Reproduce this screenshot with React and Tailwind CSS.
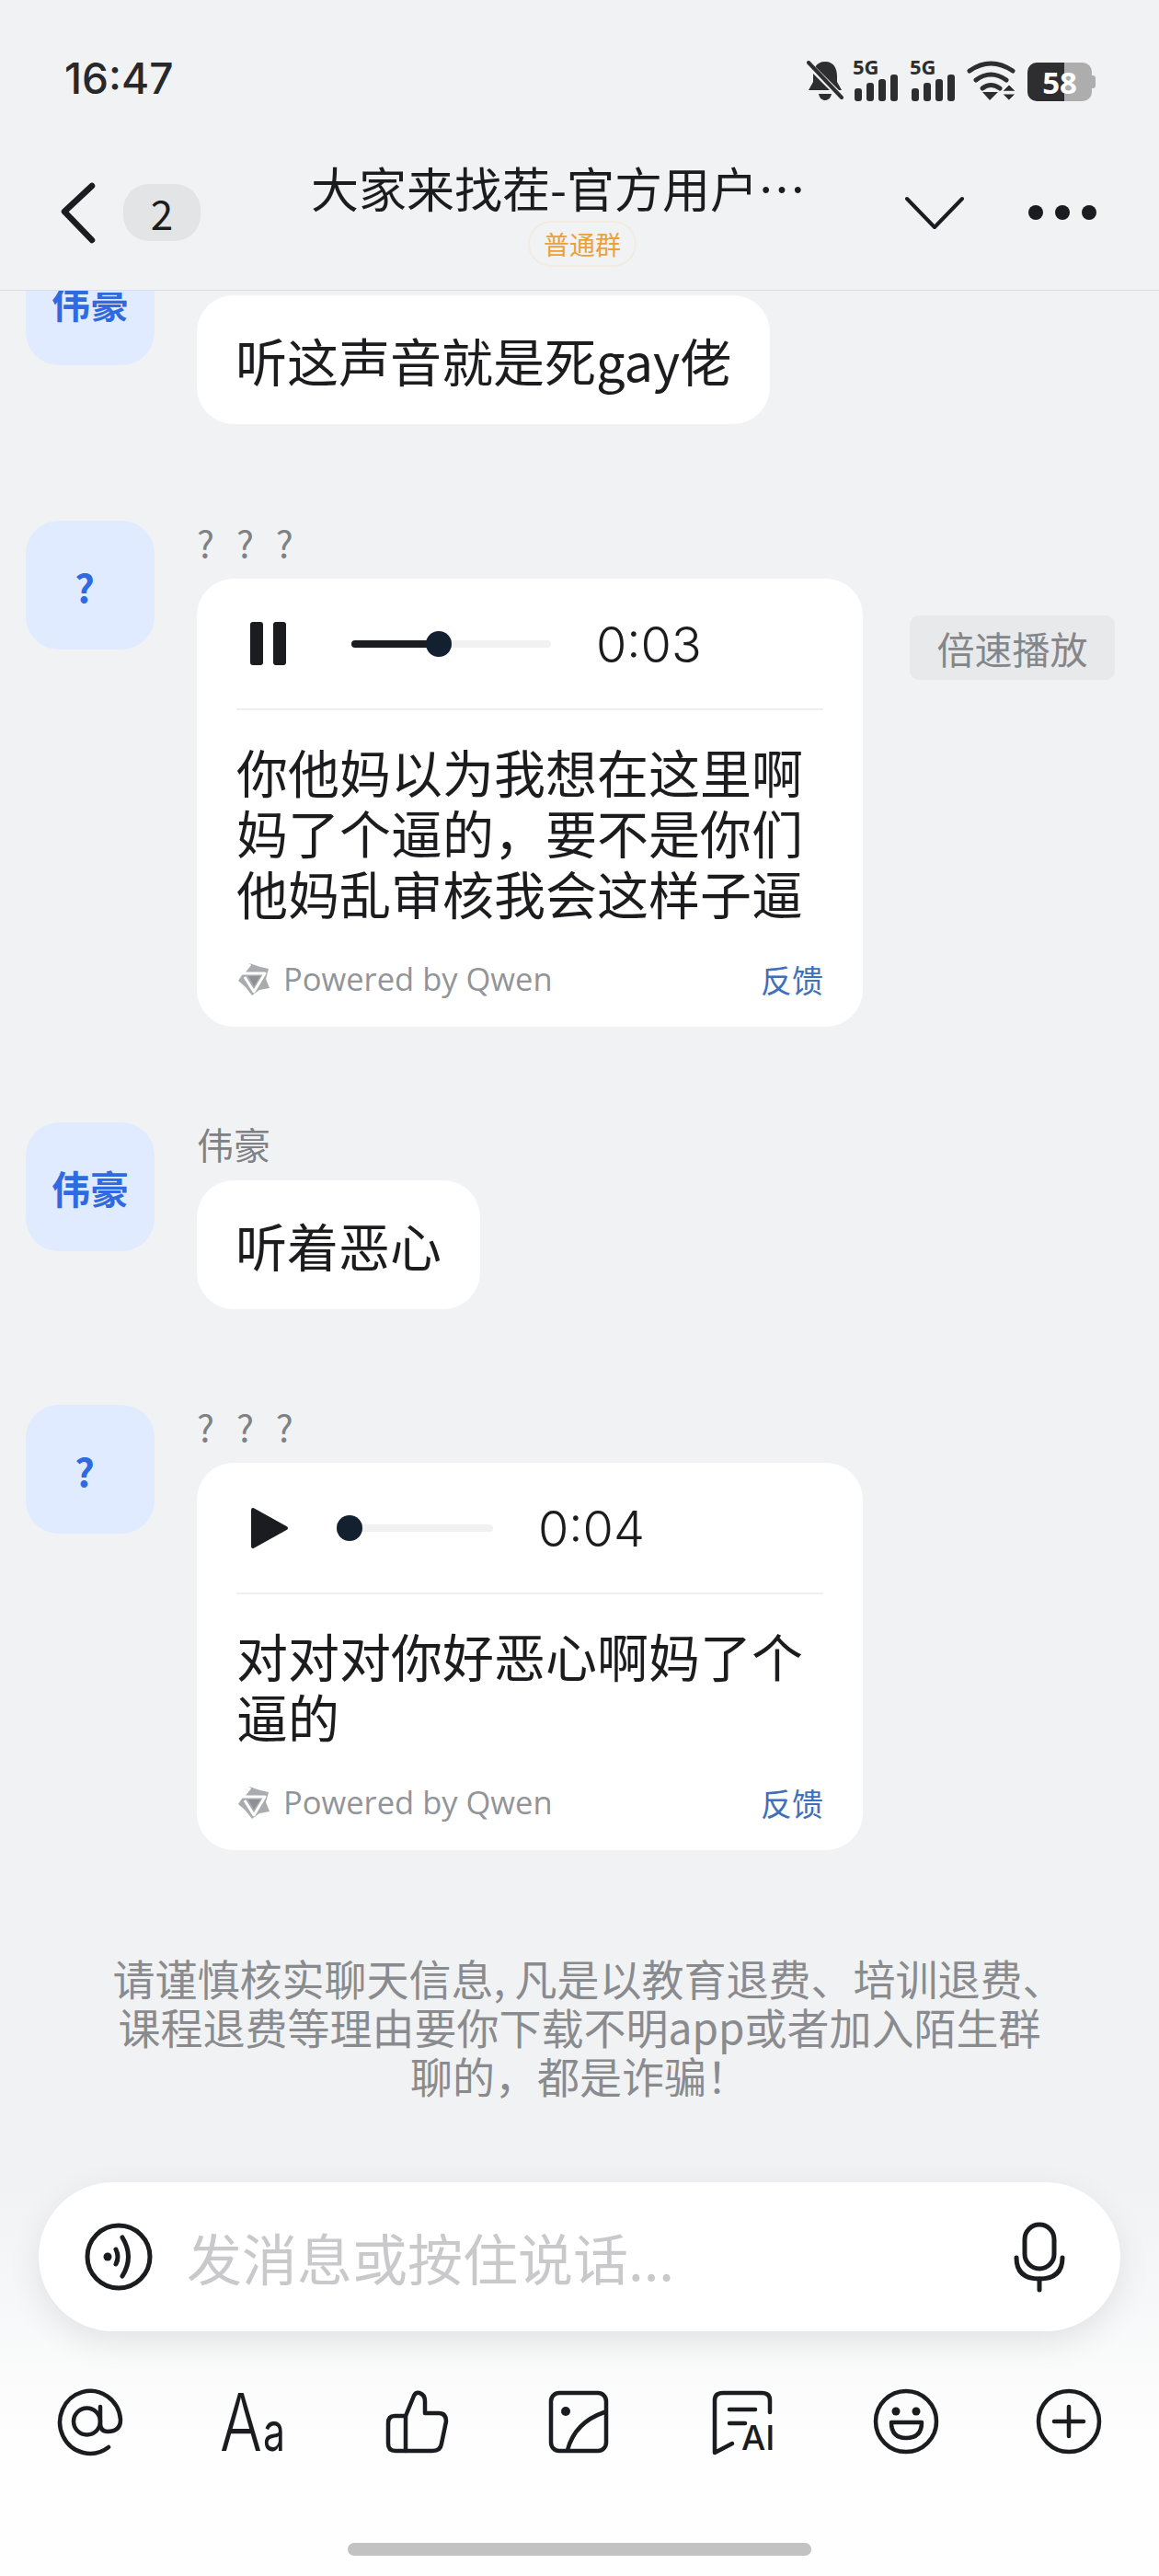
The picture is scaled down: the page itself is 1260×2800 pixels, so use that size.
const Slider = ({ width, pct }) => (
  <div className="relative h-[8px] rounded-full bg-[#f1f1f2]" style={{ width }}>
    <div className="h-full rounded-full bg-[#1b1c20]" style={{ width: `${pct}%` }} />
    <div className="absolute top-[-10px] h-[28px] w-[28px] rounded-full bg-[#13202f]" style={{ left: `calc(${pct}% - 14px)` }} />
  </div>
);

const Qwen = () => (
  <svg width="38" height="38" viewBox="0 0 38 38" fill="none" strokeLinejoin="round">
    <path d="M14 2 L26 6 L35 8 L32 19 L36 29 L25 31 L17 37 L10 28 L2 21 L8 12 Z" fill="#a9abae" />
    <path d="M15 3 L7 13 H31 L19 33 L9 17" stroke="#fff" strokeWidth="3" />
    <path d="M13 16 H26 L19 27 Z" fill="#8d9094" />
  </svg>
);

const Avatar = ({ children, className = "" }) => (
  <div className={`flex h-[140px] w-[140px] shrink-0 items-center justify-center rounded-[36px] bg-[#e1ebff] text-[42px] font-bold text-[#2f6ae0] ${className}`}>
    {children}
  </div>
);

const Name = ({ children }) => (
  <div className="mb-[17px] h-[46px] text-[40px] leading-[46px] text-[#808184] [word-spacing:15px]">{children}</div>
);

const Bubble = ({ children, className = "" }) => (
  <div className={`h-[140px] w-fit rounded-[40px] bg-white px-[42px] text-[56px] leading-[140px] text-[#1c1c1e] ${className}`}>{children}</div>
);

const VoiceCard = ({ playing, time, lines, extra }) => (
  <div className="flex items-start">
    <div className="w-[724px] rounded-[40px] bg-white px-[43px] pb-[27px]">
      <div className="flex h-[141px] items-center pl-[15px]">
        {playing ? (
          <div className="flex w-[39px] justify-between">
            <div className="h-[47px] w-[14px] rounded-[3px] bg-[#1b1c20]" />
            <div className="h-[47px] w-[14px] rounded-[3px] bg-[#1b1c20]" />
          </div>
        ) : (
          <svg width="44" height="48" viewBox="0 0 44 48" className="ml-[-1px]">
            <path d="M4 4 L40 24 L4 44 Z" fill="#1b1c20" stroke="#1b1c20" strokeWidth="4" strokeLinejoin="round" />
          </svg>
        )}
        <div className={playing ? "ml-[71px]" : "ml-[53px]"}>
          <Slider width={playing ? 217 : 168} pct={playing ? 44 : 7} />
        </div>
        <div className="ml-[49px] pt-[2px] font-['Inter',sans-serif] text-[54px] font-light leading-none text-[#1c1c1e]">{time}</div>
      </div>
      <div className="h-[2px] bg-[#efeff0]" />
      <div className="mt-[33px] text-[56px] leading-[66px] text-[#1c1c1e]">
        {lines.map((l) => (
          <div key={l}>{l}</div>
        ))}
      </div>
      <div className="mt-[36px] flex h-[50px] items-center justify-between">
        <div className="flex items-center gap-[13px]">
          <Qwen />
          <span className="font-['Open_Sans',sans-serif] text-[34.5px] text-[#919498]">Powered by Qwen</span>
        </div>
        <span className="text-[34px] text-[#3e70bd]">反馈</span>
      </div>
    </div>
    {extra}
  </div>
);

const Bars = () => (
  <div className="flex flex-col items-start">
    <div className="ml-[-2px] h-[18px] font-['Open_Sans',sans-serif] text-[22px] font-bold leading-[18px] text-[#2e2e30]">5G</div>
    <svg width="48" height="29" viewBox="0 0 48 29" fill="#2e2e30">
      <rect x="0" y="15" width="8" height="14" rx="3" />
      <rect x="13" y="9" width="8" height="20" rx="3" />
      <rect x="26" y="5" width="8" height="24" rx="3" />
      <rect x="39" y="0" width="8" height="29" rx="3" />
    </svg>
  </div>
);

const stroke = { fill: "none", stroke: "#1b1c20", strokeWidth: 4.5, strokeLinecap: "round", strokeLinejoin: "round" };

export default function App() {
  return (
    <div className="flex h-[2800px] w-[1260px] flex-col overflow-hidden bg-[#f1f2f4] font-['Noto_Sans_CJK_SC','Noto_Sans',sans-serif]">
      <header className="h-[316px] shrink-0 border-b border-[#dcdde0]">
        <div className="flex h-[170px] items-start justify-between pl-[70px] pr-[69px] pt-[62px]">
          <div className="font-['Inter',sans-serif] text-[46px] font-medium leading-[46px] text-[#27282b]">16:47</div>
          <div className="flex items-end gap-[12px] pt-[1px]">
            <svg width="40" height="44" viewBox="0 0 40 44">
              <path d="M20 1 C10 1 7 9 7 17 V23 L2 32 H38 L33 23 V17 C33 9 30 1 20 1 Z M13 36 H27 C26 41 23 43 20 43 C17 43 14 41 13 36 Z" fill="#2e2e30" />
              <path d="M2 4 L38 40" stroke="#f1f2f4" strokeWidth="7" />
              <path d="M2 2 L38 40" stroke="#2e2e30" strokeWidth="4" strokeLinecap="round" />
            </svg>
            <Bars />
            <div className="ml-[2px]"><Bars /></div>
            <svg width="54" height="44" viewBox="0 0 54 44" fill="none" stroke="#2e2e30" strokeWidth="5" strokeLinecap="round">
              <path d="M3 11 Q26 -5 50 11" />
              <path d="M10 21 Q26 9 43 21" />
              <path d="M17 30 Q26 23 36 30" />
              <path d="M18 35 H35 L26 44 Z" fill="#2e2e30" stroke="none" transform="translate(-1 -1)" />
              <path d="M39 33 L46 26 L53 33 Z M39 36 H53 L46 43 Z" fill="#2e2e30" stroke="#f1f2f4" strokeWidth="1" />
            </svg>
            <div className="relative flex h-[42px] w-[74px] items-center">
              <div className="flex h-[42px] w-[70px] items-center justify-center rounded-[10px] bg-[linear-gradient(to_right,#2e2e30_57%,#adadad_57%)] font-['Open_Sans',sans-serif] text-[33px] font-bold leading-none text-white">58</div>
              <div className="h-[14px] w-[4px] rounded-r-[3px] bg-[#adadad]" />
            </div>
          </div>
        </div>
        <div className="relative flex h-[145px] items-start">
          <svg width="44" height="70" viewBox="0 0 44 70" className="ml-[62px] mt-[27px]" {...stroke} strokeWidth="6.5">
            <path d="M38 5 L8 33 L38 64" />
          </svg>
          <div className="ml-[28px] mt-[30px] flex h-[62px] w-[84px] items-center justify-center rounded-[28px] bg-[#e3e4e6] text-[44px] leading-none text-[#1c1c1e]">2</div>
          <div className="absolute left-0 top-[-1px] w-[1260px]">
            <div className="ml-[338px] h-[70px] whitespace-nowrap text-[52px] leading-[70px] text-[#1c1c1e]">大家来找茬-官方用户…</div>
            <div className="ml-[574px] mt-[1px] flex h-[50px] w-[118px] items-center justify-center rounded-[25px] border-2 border-[#f2ebe1] text-[28px] leading-none text-[#e9a23b]">普通群</div>
          </div>
          <svg width="68" height="40" viewBox="0 0 68 40" className="ml-[764px] mt-[42px]" {...stroke} strokeWidth="4">
            <path d="M4 4 L34 35 L64 4" />
          </svg>
          <div className="ml-[68px] mt-[53px] flex gap-[13px]">
            <div className="h-[16px] w-[16px] rounded-full bg-[#1b1c20]" />
            <div className="h-[16px] w-[16px] rounded-full bg-[#1b1c20]" />
            <div className="h-[16px] w-[16px] rounded-full bg-[#1b1c20]" />
          </div>
        </div>
      </header>

      <main className="flex-1 overflow-hidden pl-[28px]">
        <div className="mt-[-59px] flex gap-[46px]">
          <Avatar>伟豪</Avatar>
          <div className="pt-[64px]"><Bubble>听这声音就是死gay佬</Bubble></div>
        </div>

        <div className="mt-[105px] flex gap-[46px]">
          <Avatar className="pr-[12px]">?</Avatar>
          <div>
            <Name>? ? ?</Name>
            <VoiceCard
              playing
              time="0:03"
              lines={["你他妈以为我想在这里啊", "妈了个逼的，要不是你们", "他妈乱审核我会这样子逼"]}
              extra={
                <div className="ml-[51px] mt-[40px] flex h-[70px] w-[223px] items-center justify-center rounded-[10px] bg-[#e8e9eb] text-[41px] leading-none text-[#85868a]">倍速播放</div>
              }
            />
          </div>
        </div>

        <div className="mt-[104px] flex gap-[46px]">
          <Avatar>伟豪</Avatar>
          <div>
            <Name>伟豪</Name>
            <Bubble>听着恶心</Bubble>
          </div>
        </div>

        <div className="mt-[104px] flex gap-[46px]">
          <Avatar className="pr-[12px]">?</Avatar>
          <div>
            <Name>? ? ?</Name>
            <VoiceCard playing={false} time="0:04" lines={["对对对你好恶心啊妈了个", "逼的"]} />
          </div>
        </div>

        <div className="ml-[-28px] mt-[112px] text-center text-[46px] leading-[53px] text-[#8a8b8e]">
          <div className="whitespace-nowrap pl-[20px]">请谨慎核实聊天信息, 凡是以教育退费、培训退费、</div>
          <div className="whitespace-nowrap">课程退费等理由要你下载不明app或者加入陌生群</div>
          <div className="whitespace-nowrap">聊的，都是诈骗！</div>
        </div>
      </main>

      <footer className="flex h-[480px] shrink-0 flex-col bg-gradient-to-b from-[#f1f2f4] from-10% to-[#fefefe] to-70% px-[42px] pt-[52px]">
        <div className="flex h-[162px] items-center rounded-full bg-white pl-[50px] pr-[58px] shadow-[0_12px_36px_rgba(0,0,0,0.09)]">
          <svg width="74" height="74" viewBox="0 0 74 74" {...stroke} strokeWidth="5">
            <circle cx="37" cy="37" r="34" />
            <circle cx="25" cy="37" r="4.5" fill="#1b1c20" stroke="none" />
            <path d="M34 29 Q38 37 34 45" />
            <path d="M41 16 Q54 37 41 58" />
          </svg>
          <div className="ml-[37px] flex-1 text-[60px] leading-none text-[#c9c9cb]">发消息或按住说话...</div>
          <svg width="60" height="78" viewBox="0 0 60 78" {...stroke} strokeWidth="5">
            <rect x="14" y="4" width="32" height="48" rx="16" />
            <path d="M5 40 Q5 63 30 63 Q55 63 55 40" />
            <path d="M30 63 V75" />
          </svg>
        </div>

        <div className="ml-[-42px] mr-[-42px] mt-[60px] flex justify-between px-[62px]">
          <svg width="72" height="76" viewBox="0 0 72 76" {...stroke}>
            <circle cx="32.5" cy="38" r="14.5" />
            <path d="M47 22 V40 Q47 49 55 49 Q69 49 69 36 A33 34 0 1 0 56 66" />
          </svg>
          <svg width="72" height="76" viewBox="0 0 72 76">
            <text x="0" y="70" textLength="46" lengthAdjust="spacingAndGlyphs" fontFamily="Inter, sans-serif" fontWeight="300" fontSize="86" fill="#1b1c20">A</text>
            <text x="47" y="70" textLength="24" lengthAdjust="spacingAndGlyphs" fontFamily="Inter, sans-serif" fontWeight="400" fontSize="58" fill="#1b1c20">a</text>
          </svg>
          <svg width="72" height="76" viewBox="0 0 72 76" {...stroke}>
            <path d="M12 32 H24 L33 10 Q35 6 39 7 Q45 9 45 16 V29 H60 Q68 29 68 38 L63 62 Q62 70 53 70 H13 Q5 70 5 62 V40 Q5 32 12 32 Z" />
            <path d="M24 32 V70" />
          </svg>
          <svg width="72" height="76" viewBox="0 0 72 76" {...stroke}>
            <rect x="5" y="7" width="60" height="63" rx="9" />
            <circle cx="21" cy="27" r="5" fill="#1b1c20" stroke="none" />
            <path d="M23 69 Q31 39 63 28" />
          </svg>
          <svg width="72" height="76" viewBox="0 0 72 76" {...stroke}>
            <path d="M66 28 V15 Q66 7 57 7 H15 Q6 7 6 15 V72 L25 62" />
            <path d="M22 25 H50" />
            <path d="M22 40 H39" />
            <text x="35" y="69" fontFamily="Inter, sans-serif" fontWeight="500" fontSize="37" fill="#1b1c20" stroke="none">AI</text>
          </svg>
          <svg width="72" height="76" viewBox="0 0 72 76" {...stroke}>
            <circle cx="36" cy="38" r="33" />
            <circle cx="25" cy="27" r="4.5" fill="#1b1c20" stroke="none" />
            <circle cx="47" cy="27" r="4.5" fill="#1b1c20" stroke="none" />
            <path d="M20 39 H53 Q53 56 36 56 Q20 56 20 39 Z" />
          </svg>
          <svg width="72" height="76" viewBox="0 0 72 76" {...stroke}>
            <circle cx="36" cy="38" r="33" />
            <path d="M20 38 H52 M36 22 V54" />
          </svg>
        </div>

        <div className="mx-auto mt-[94px] h-[14px] w-[504px] rounded-full bg-[#c2c2c3]" />
      </footer>
    </div>
  );
}
